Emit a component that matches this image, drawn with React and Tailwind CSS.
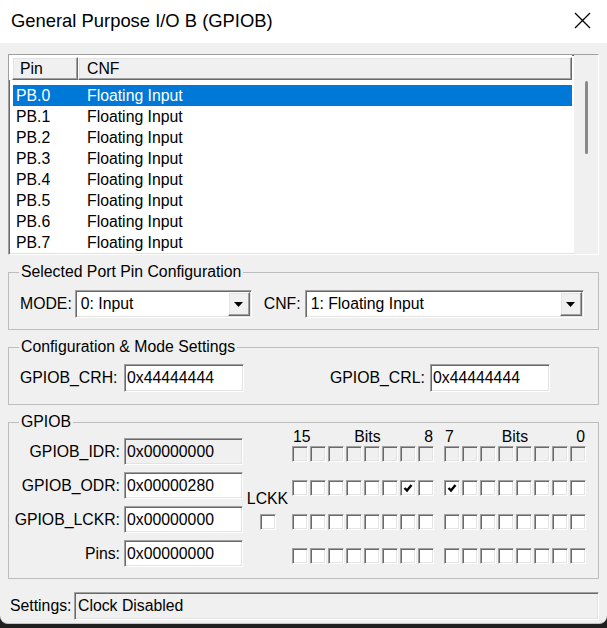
import React from "react";

const sunken =
  "border border-t-[#a0a0a0] border-l-[#a0a0a0] border-r-white border-b-white shadow-[inset_1px_1px_0_#696969,inset_-1px_-1px_0_#e3e3e3]";
const raised =
  "border border-t-white border-l-white border-r-[#696969] border-b-[#696969] shadow-[inset_-1px_-1px_0_#a0a0a0,inset_1px_1px_0_#e3e3e3]";

const pins = ["PB.0", "PB.1", "PB.2", "PB.3", "PB.4", "PB.5", "PB.6", "PB.7"];

const regs = [
  { label: "GPIOB_IDR:", value: "0x00000000", disabled: true, bits: 0x0 },
  { label: "GPIOB_ODR:", value: "0x00000280", bits: 0x280 },
  { label: "GPIOB_LCKR:", value: "0x00000000", bits: 0x0 },
  { label: "Pins:", value: "0x00000000", bits: 0x0 },
];

function Field({ value, width, height, disabled }) {
  return (
    <div
      className={`${sunken} ${width} ${height} flex items-center pl-[2px] ${
        disabled ? "bg-[#f0f0f0]" : "bg-white"
      }`}
    >
      {value}
    </div>
  );
}

function Select({ value, width }) {
  return (
    <div className={`${sunken} ${width} h-[28px] bg-white flex items-stretch p-[1px]`}>
      <span className="flex-1 flex items-center pl-[4px]">{value}</span>
      <span className={`${raised} w-[22px] bg-[#f0f0f0] flex items-center justify-center`}>
        <svg width="9" height="5" viewBox="0 0 9 5">
          <path d="M0 0h9L4.5 5z" fill="#000" />
        </svg>
      </span>
    </div>
  );
}

function Bit({ checked, disabled }) {
  return (
    <span
      className={`${sunken} w-[16px] h-[16px] flex items-center justify-center ${
        disabled ? "bg-[#f0f0f0]" : "bg-white"
      }`}
    >
      {checked ? (
        <svg width="10" height="10" viewBox="0 0 10 10">
          <path d="M1.5 5l2.5 2.5L8.5 2" fill="none" stroke="#000" strokeWidth="2.4" />
        </svg>
      ) : null}
    </span>
  );
}

function BitRow({ value, disabled }) {
  const hi = [15, 14, 13, 12, 11, 10, 9, 8];
  const lo = [7, 6, 5, 4, 3, 2, 1, 0];
  return (
    <div className="flex gap-[10px]">
      <div className="flex gap-[2px]">
        {hi.map((b) => (
          <Bit key={b} checked={((value >> b) & 1) === 1} disabled={disabled} />
        ))}
      </div>
      <div className="flex gap-[2px]">
        {lo.map((b) => (
          <Bit key={b} checked={((value >> b) & 1) === 1} disabled={disabled} />
        ))}
      </div>
    </div>
  );
}

export default function App() {
  return (
    <div className="w-[607px] h-[628px] bg-[#1f1f1f] font-['Liberation_Sans',Arial,sans-serif] text-[15.8px] text-black">
      <div className="w-[607px] h-[624px] bg-[#f0f0f0] rounded-b-[8px] border-b border-[#c4c4c4] flex flex-col overflow-hidden">
        {/* title bar */}
        <div className="h-[43px] bg-white flex items-center justify-between pl-[11px] pr-[16px] pb-[2px]">
          <span className="text-[18.4px]">General Purpose I/O B (GPIOB)</span>
          <svg width="17" height="17" viewBox="0 0 17 17">
            <path d="M1 1L16 16M16 1L1 16" stroke="#000" strokeWidth="1.3" />
          </svg>
        </div>

        <div className="px-[8px] flex flex-col">
          {/* list view */}
          <div className={`${sunken} mt-[11px] h-[201px] bg-white flex overflow-hidden`}>
            <div className="flex-1 flex flex-col">
              <div className="h-[25px] pt-[2px] flex bg-white">
                <div className={`${raised} w-[66px] ml-[3px] bg-[#f0f0f0] flex items-center pl-[7px]`}>Pin</div>
                <div className={`${raised} flex-1 bg-[#f0f0f0] flex items-center pl-[8px]`}>CNF</div>
              </div>
              <div className="pt-[5px] flex flex-col">
                {pins.map((p, i) => (
                  <div
                    key={p}
                    className={`h-[21px] ml-[4px] flex items-center pl-[3px] ${
                      i === 0 ? "bg-[#0078d7] text-white" : ""
                    }`}
                  >
                    <span className="w-[71px]">{p}</span>
                    <span>Floating Input</span>
                  </div>
                ))}
              </div>
            </div>
            <div className="w-[24px] ml-[2px] bg-[#f0f0f0] flex justify-center pt-[26px]">
              <div className="w-[3px] h-[73px] bg-[#8a8a8a] rounded-full" />
            </div>
          </div>

          {/* selected port pin configuration */}
          <fieldset className="mt-[8px] border border-[#bdbdbd] pl-[10px] pr-[14px] pb-[11px]">
            <legend className="px-[2px] leading-[18px]">Selected Port Pin Configuration</legend>
            <div className="pt-[9px] flex items-center pl-[1px]">
              <span>MODE:</span>
              <div className="ml-[3px]">
                <Select value="0: Input" width="w-[177px]" />
              </div>
              <span className="ml-[12px]">CNF:</span>
              <div className="ml-[4px]">
                <Select value="1: Floating Input" width="w-[279px]" />
              </div>
            </div>
          </fieldset>

          {/* configuration & mode settings */}
          <fieldset className="mt-[8px] border border-[#bdbdbd] pl-[10px] pr-[14px] pb-[12px]">
            <legend className="px-[2px] leading-[18px]">Configuration &amp; Mode Settings</legend>
            <div className="pt-[8px] flex items-center pl-[1px]">
              <span className="w-[104px]">GPIOB_CRH:</span>
              <Field value="0x44444444" width="w-[120px]" height="h-[28px]" />
              <span className="ml-[86px] w-[100px]">GPIOB_CRL:</span>
              <Field value="0x44444444" width="w-[120px]" height="h-[28px]" />
            </div>
          </fieldset>

          {/* GPIOB */}
          <fieldset className="mt-[8px] border border-[#bdbdbd] pl-[10px] pr-[10px] pb-[11px]">
            <legend className="px-[2px] leading-[18px]">GPIOB</legend>
            <div className="flex">
              <div className="-ml-[6px] flex flex-col gap-[7px] pt-[7px]">
                {regs.map((r) => (
                  <div key={r.label} className="flex items-center">
                    <span className="w-[111px] text-right pr-[4px] whitespace-nowrap">{r.label}</span>
                    <Field value={r.value} width="w-[119px]" height="h-[27px]" disabled={r.disabled} />
                  </div>
                ))}
              </div>
              <div className="w-[49px] flex flex-col items-center pt-[59px]">
                <span className="leading-[18px]">LCKK</span>
                <div className="mt-[6px]">
                  <Bit />
                </div>
              </div>
              <div className="-mt-[3px] flex flex-col">
                <div className="h-[18px] flex gap-[10px] leading-[18px]">
                  <div className="w-[142px] flex justify-between px-[1px]">
                    <span>15</span>
                    <span>Bits</span>
                    <span>8</span>
                  </div>
                  <div className="w-[142px] flex justify-between px-[1px]">
                    <span>7</span>
                    <span>Bits</span>
                    <span>0</span>
                  </div>
                </div>
                <div className="flex flex-col gap-[18px]">
                  {regs.map((r) => (
                    <BitRow key={r.label} value={r.bits} disabled={r.disabled} />
                  ))}
                </div>
              </div>
            </div>
          </fieldset>

          {/* settings */}
          <div className="mt-[13px] flex items-center">
            <span className="ml-[2px] w-[64px]">Settings:</span>
            <Field value={<span className="pl-[1px]">Clock Disabled</span>} width="flex-1" height="h-[28px]" disabled />
          </div>
        </div>
      </div>
    </div>
  );
}
